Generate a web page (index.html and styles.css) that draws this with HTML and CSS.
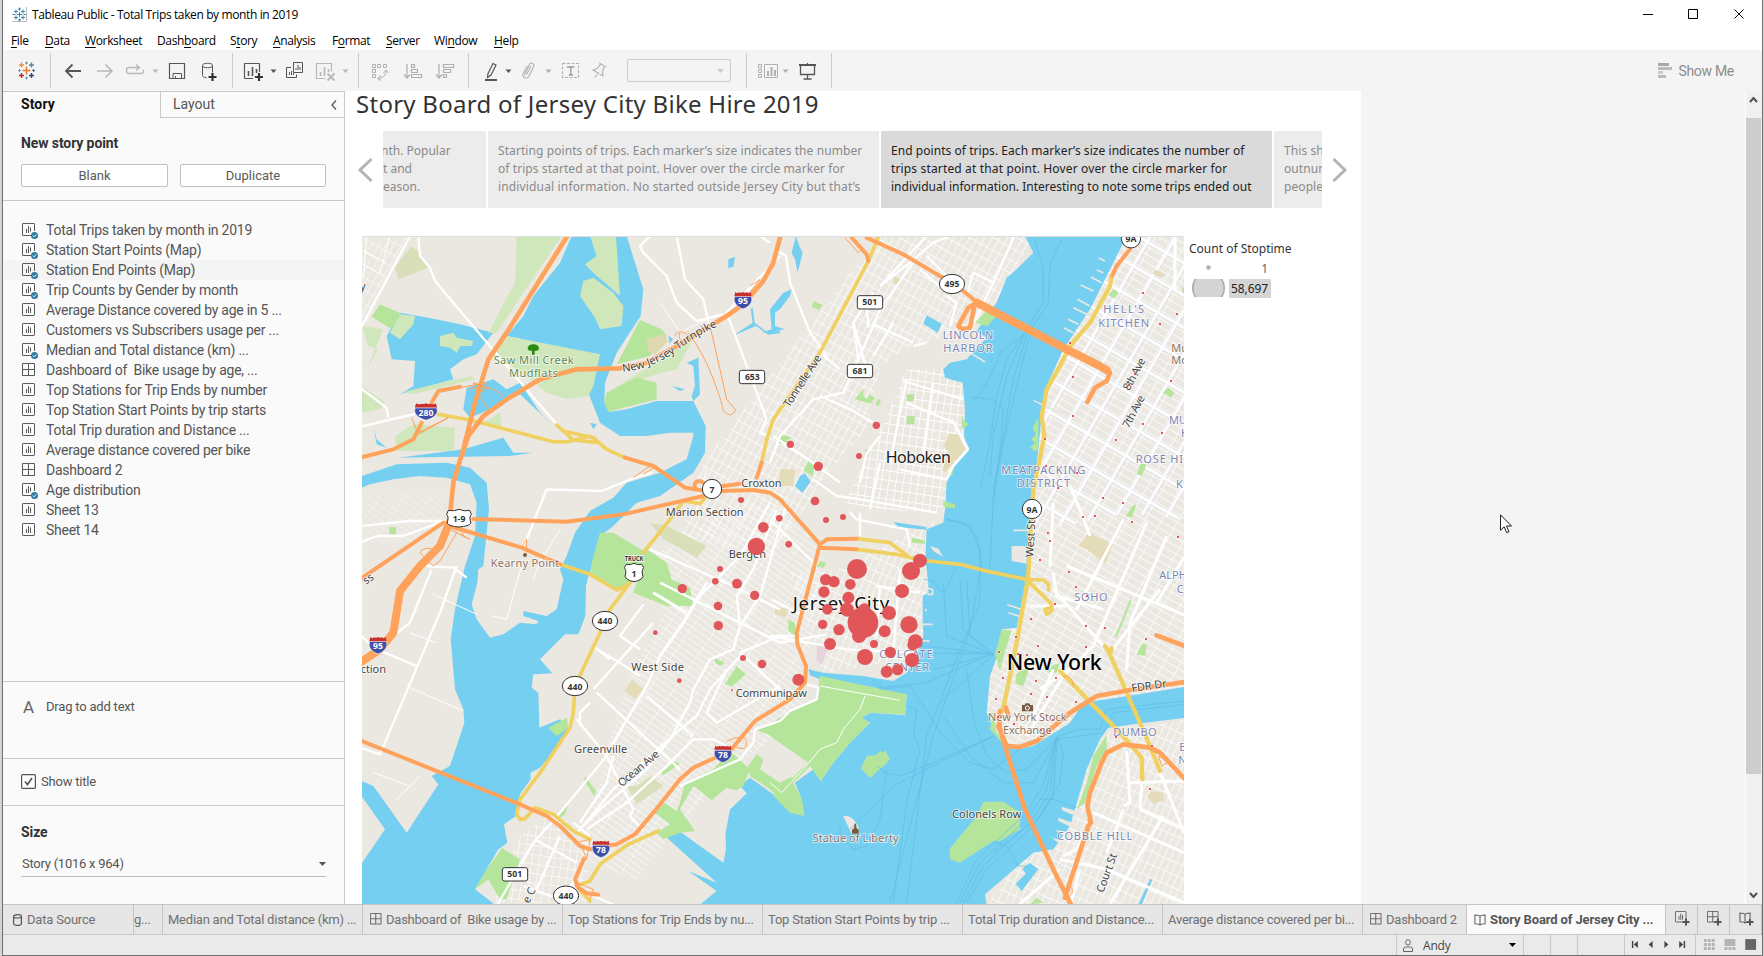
FILE: index.html
```html
<!DOCTYPE html>
<html lang="en">
<head>
<meta charset="utf-8">
<title>Tableau Public - Total Trips taken by month in 2019</title>
<link rel="stylesheet" href="styles.css">
</head>
<body>
<svg class="defs" width="0" height="0" aria-hidden="true">
  <defs>
    <symbol id="i-sheet" viewBox="0 0 17 17"><rect x=".5" y=".5" width="12" height="12" rx=".6" fill="none" stroke="#5a5a5a"/><path d="M4.500 6v4M6.500 3v7M8.500 4.500v5.500" stroke="#5a5a5a" fill="none"/></symbol>
    <symbol id="i-used" viewBox="0 0 17 17"><path d="M9 12.500H1a.5.5 0 0 1-.5-.5V1A.5.5 0 0 1 1 .5h11a.5.5 0 0 1 .5.500V8" fill="none" stroke="#5a5a5a"/><path d="M4.500 6v4M6.500 3v7M8.500 4.500v4" stroke="#5a5a5a" fill="none"/><circle cx="12.500" cy="12.500" r="3.500" fill="#2e7b9e"/><path d="M10.800 12.500l1.300 1.300 2.200-2.400" stroke="#fff" fill="none"/></symbol>
    <symbol id="i-dash" viewBox="0 0 17 17"><path d="M.5.5h12v12H.5zM6.500.5v12M.5 6.500h12" fill="none" stroke="#5a5a5a"/></symbol>
    <symbol id="i-story" viewBox="0 0 13 14"><path d="M6.500 3v9.500M6.500 3C5.500 1.500 3.500 1.500 1 1.500v9.500c2.500 0 4.500 0 5.500 1.500C7.500 11 9.500 11 12 11V1.500C9.500 1.500 7.500 1.500 6.500 3z" fill="none" stroke="#5a5a5a" stroke-width="1.100"/></symbol>
    <symbol id="i-plus" viewBox="0 0 8 8"><path d="M4 .5v7M.5 4h7" stroke="#555" stroke-width="2" fill="none"/></symbol>
  </defs>
</svg>

<div class="window">
  <header class="titlebar">
    <svg class="app-icon" width="15" height="15" viewBox="0 0 15 15"><path d="M7.500 5v5M5 7.500h5M4 2.500v4M2 4.500h4M11 2.500v4M9 4.500h4M4 8.500v4M2 10.500h4M11 8.500v4M9 10.500h4M7.500.5v3M6 2h3M7.500 11.500v3M6 13h3M.5 7.500h3M11.500 7.500h3" stroke="#3b84ad" fill="none"/><path d="M14.500 0v14.500H0" stroke="#bbb" fill="none"/></svg>
    <span class="caption">Tableau Public - Total Trips taken by month in 2019</span>
    <svg class="win-controls" width="120" height="28" viewBox="1640 0 120 28"><path d="M1643 14.500h10M1688.500 9.500h9v9h-9zM1734.500 9.500l9 9M1743.500 9.500l-9 9" fill="none" stroke="#000"/></svg>
  </header>
  <nav class="menubar">
    <span><u>F</u>ile</span><span><u>D</u>ata</span><span><u>W</u>orksheet</span><span>Dash<u>b</u>oard</span><span>S<u>t</u>ory</span><span><u>A</u>nalysis</span><span>F<u>o</u>rmat</span><span><u>S</u>erver</span><span>Wi<u>n</u>dow</span><span><u>H</u>elp</span>
  </nav>

  <div class="toolbar">
    <svg class="tools" width="48" height="41" viewBox="3 50 48 41">
      <g fill="none" stroke-width="1.400"><path d="M26.500 66.500v8M22.500 70.500h8" stroke="#e8762d"/><path d="M21.500 62.500v5M19 65h5" stroke="#eb912c"/><path d="M31.500 62.500v5M29 65h5" stroke="#59879b"/><path d="M21.500 73v5M19 75.500h5" stroke="#c72035"/><path d="M31.500 73v5M29 75.500h5" stroke="#1f457e"/><path d="M26.500 61.500v3M25 63h3M26.500 76.500v3M25 78h3M18 70.500h3M19.500 69v3" stroke="#7199a6" stroke-width="1"/><path d="M32 70.500h3M33.500 69v3" stroke="#5b6591" stroke-width="1"/></g>
    </svg>
    <svg class="tools" width="182" height="41" viewBox="51 50 182 41">
      <g fill="none" stroke="#555" stroke-width="1.800"><path d="M66 71h15M72.500 64.500L66 71l6.500 6.500"/></g>
      <g fill="none" stroke="#b8b8b8" stroke-width="1.600"><path d="M97 71h15M105.500 64.500l6.500 6.500-6.500 6.500"/><path d="M139 67.500h-10a2.500 2.500 0 0 0-2.500 2.500v1a2.500 2.500 0 0 0 2.500 2.500h12a2.500 2.500 0 0 0 2.500-2.500v-1.500M136 64.500l3.500 3-3.500 3" stroke-width="1.300"/></g>
      <path d="M152.500 69.500h6l-3 3.500z" fill="#b8b8b8"/>
      <g fill="none" stroke="#555"><path d="M169.500 63.500h15v15h-15z" stroke-width="1.200"/><path d="M173 78.500v-5h8.500v5M175.500 76v2.500"/><ellipse cx="207.500" cy="65.500" rx="5" ry="2.200"/><path d="M202.500 65.500v10c0 1 1.500 2 4 2.300M212.500 65.500v7"/></g>
      <path d="M212.500 73v8M208.500 77h8" stroke="#333" stroke-width="2.200"/>
    </svg>
    <svg class="tools" width="126" height="41" viewBox="233 50 126 41">
      <g fill="none" stroke="#555"><path d="M253 78.500h-8a.5.5 0 0 1-.5-.5V64a.5.500 0 0 1 .5-.5h14a.5.500 0 0 1 .5.500v8" stroke-width="1.200"/><path d="M248.500 71v5M252.500 67v9M256.500 69v4" stroke-width="1.600"/><path d="M293.500 62.500h9v10h-9zM291 67.500h-4.500v10h10v-3M296 68v2M298 65v5M300 67v3M289.500 72v3M291.500 71v4M293.500 73v2"/></g>
      <path d="M259 73v8M255 77h8" stroke="#333" stroke-width="2.200"/><path d="M270.500 69.500h6l-3 3.500z" fill="#555"/>
      <g fill="none" stroke="#b8b8b8"><path d="M325 78.500h-8.500v-15h15v8" stroke-width="1.200"/><path d="M320.500 72v4M324.500 67v9M328.500 69v3" stroke-width="1.600"/><path d="M327.500 73.500l7 7M334.500 73.500l-7 7" stroke-width="1.800"/></g><path d="M342.500 69.500h6l-3 3.500z" fill="#b8b8b8"/>
    </svg>
    <svg class="tools" width="110" height="41" viewBox="359 50 110 41">
      <g fill="none" stroke="#b0b0b0"><path d="M372.500 64.500h3v3h-3zM377.500 64.500h3v3h-3zM383.500 64.500h3v3h-3zM372.500 69.500h3v3h-3zM372.500 74.500h3v3h-3z"/><path d="M386 70.500c0 5-3 7.500-8 8M383.500 73l2.500-3 2.500 3M381 75.500l-3.500 3 3.500 2"/><path d="M407 64v13M404 74.500l3 3.500 3-3.500M411.500 64.500h3v3h-3zM411.500 69.500h6v3h-6zM411.500 74.500h10v3h-10z" stroke-width="1.200"/><path d="M439 64v13M436 74.500l3 3.500 3-3.500M443.500 64.500h10v3h-10zM443.500 69.500h7v3h-7zM443.500 74.500h3v3h-3z" stroke-width="1.200"/></g>
    </svg>
    <svg class="tools open" width="150" height="41" viewBox="469 50 150 41">
      <g fill="none" stroke="#555"><path d="M488 73.500l5-10 3 1.500-5 10-3.500 2.500z" stroke-width="1.200"/><path d="M485 80h12" stroke-width="2"/></g><path d="M505.500 69.500h6l-3 3.500z" fill="#555"/>
      <g fill="none" stroke="#b0b0b0" stroke-width="1.100"><path d="M524.500 75l5-10.500a2.300 2.300 0 0 1 4.200 2l-4.700 9.500a3 3 0 0 1-5.800-2.500l4-7.500M526.500 74.500l4.500-8.500"/><path d="M562.500 63.500h16v14h-16z" stroke-dasharray="3 1.500"/><path d="M594.500 77.500l4.500-5M600 63.500l5.500 3-1.500 1-1.500 4 .5 4.500-2.500-1.500-5-3-2.500-1.500 4-1.500 3-3.500z" /></g>
      <path d="M567 67h7.500M570.800 67v8M569 75h4" stroke="#999" stroke-width="1.300"/><path d="M545.500 69.500h6l-3 3.500z" fill="#b0b0b0"/>
    </svg>
    <span class="fit-select"><svg width="8" height="4" viewBox="0 0 8 4"><path d="M0 0h7L3.500 4z" fill="#ccc"/></svg></span>
    <svg class="tools" width="86" height="41" viewBox="747 50 86 41">
      <g fill="none" stroke="#b0b0b0"><path d="M759.500 64.500h3v3h-3zM759.500 69.500h3v3h-3zM759.500 74.500h3v3h-3zM765.500 64.500h13v13h-13z"/><path d="M769 71v5M772.500 67v9M776 70v6" stroke-width="2"/></g><path d="M783.500 69.500h6l-3 3.500z" fill="#b0b0b0"/>
      <g fill="none" stroke="#555"><path d="M800 65h17" stroke-width="2"/><path d="M801.500 66v8.500h14V66M808.500 63v1M808.500 75v4M804.500 79h8" stroke-width="1.300"/></g>
    </svg>
    <span class="show-me"><svg width="14" height="15" viewBox="0 0 14 15"><path d="M0 0h11v3H0z" fill="#a8a8a8"/><path d="M0 4h14v3H0z" fill="#bbb"/><path d="M0 8h5v3H0z" fill="#ccc"/><path d="M0 12h8v3H0z" fill="#bbb"/></svg>Show Me</span>
  </div>

  <main class="body">
    <aside class="sidebar">
      <div class="pane-tabs"><b>Story</b><span>Layout<svg width="6" height="10" viewBox="0 0 6 10"><path d="M5 .5L1 5l4 4.500" fill="none" stroke="#555" stroke-width="1.300"/></svg></span></div>
      <section class="new-point">
        <h3>New story point</h3>
        <div class="buttons"><button>Blank</button><button>Duplicate</button></div>
      </section>
      <ul class="sheets">
        <li><svg><use href="#i-used"/></svg>Total Trips taken by month in 2019</li>
        <li><svg><use href="#i-used"/></svg>Station Start Points (Map)</li>
        <li class="hover"><svg><use href="#i-used"/></svg>Station End Points (Map)</li>
        <li><svg><use href="#i-used"/></svg>Trip Counts by Gender by month</li>
        <li><svg><use href="#i-sheet"/></svg>Average Distance covered by age in 5 ...</li>
        <li><svg><use href="#i-sheet"/></svg>Customers vs Subscribers usage per ...</li>
        <li><svg><use href="#i-used"/></svg>Median and Total distance (km) ...</li>
        <li><svg><use href="#i-dash"/></svg>Dashboard of&nbsp; Bike usage by age, ...</li>
        <li><svg><use href="#i-sheet"/></svg>Top Stations for Trip Ends by number</li>
        <li><svg><use href="#i-sheet"/></svg>Top Station Start Points by trip starts</li>
        <li><svg><use href="#i-sheet"/></svg>Total Trip duration and Distance ...</li>
        <li><svg><use href="#i-sheet"/></svg>Average distance covered per bike</li>
        <li><svg><use href="#i-dash"/></svg>Dashboard 2</li>
        <li><svg><use href="#i-used"/></svg>Age distribution</li>
        <li><svg><use href="#i-sheet"/></svg>Sheet 13</li>
        <li><svg><use href="#i-sheet"/></svg>Sheet 14</li>
      </ul>
      <section class="drag-text"><i>A</i>Drag to add text</section>
      <section class="show-title"><svg width="15" height="15" viewBox="0 0 15 15"><rect x=".6" y=".6" width="13.800" height="13.800" rx="1" fill="#fff" stroke="#555" stroke-width="1.200"/><path d="M4 7.500l2.500 3L11 4" fill="none" stroke="#555" stroke-width="1.700"/></svg>Show title</section>
      <section class="size"><h3>Size</h3><div class="size-select">Story (1016 x 964)<svg width="7" height="4" viewBox="0 0 7 4"><path d="M0 0h7L3.500 4z" fill="#555"/></svg></div></section>
    </aside>

    <div class="workspace">
      <div class="story">
        <h1>Story Board of Jersey City Bike Hire 2019</h1>
        <div class="navigator">
          <svg width="27" height="26" viewBox="0 0 27 26"><path d="M15.500 2L4 13l11.500 11" fill="none" stroke="#b4b4b4" stroke-width="3"/></svg>
          <div class="points">
            <p class="point first">nth. Popular<br>t and<br>eason.</p>
            <p class="point">Starting points of trips. Each marker’s size indicates the number<br>of trips started at that point. Hover over the circle marker for<br><span class="loose">individual information. No started outside Jersey City but that’s</span></p>
            <p class="point active">End points of trips. Each marker’s size indicates the number of<br><span class="loose">trips started at that point. Hover over the circle marker for</span><br><span class="tight">individual information. Interesting to note some trips ended out</span></p>
            <p class="point">This shows that men<br>outnumber women and<br>people usage</p>
          </div>
          <svg width="27" height="26" viewBox="0 0 27 26"><path d="M11.500 2L23 13 11.500 24" fill="none" stroke="#b4b4b4" stroke-width="3"/></svg>
        </div>
        <div class="viz">
<svg class="map" width="822" height="667" viewBox="6 3 2466 2001">
  <defs>
    <pattern id="g-heights" width="20" height="34" patternUnits="userSpaceOnUse" patternTransform="rotate(29)"><path d="M0 0v34M0 0h20" stroke="#fff" stroke-width="4" fill="none"/></pattern>
    <pattern id="g-hob" width="22" height="28" patternUnits="userSpaceOnUse" patternTransform="rotate(8)"><path d="M0 0v28M0 0h22" stroke="#fff" stroke-width="5" fill="none"/></pattern>
    <pattern id="g-nyc" width="44" height="21" patternUnits="userSpaceOnUse" patternTransform="rotate(30)"><path d="M0 0v21M0 0h44" stroke="#fff" stroke-width="4" fill="none"/></pattern>
    <pattern id="g-nyc2" width="66" height="84" patternUnits="userSpaceOnUse" patternTransform="rotate(30)"><path d="M8 0v84M0 10h66" stroke="#dddeea" stroke-width="11" fill="none"/><path d="M8 0v84M0 10h66" stroke="#fff" stroke-width="8" fill="none"/></pattern>
    <pattern id="g-west" width="17" height="62" patternUnits="userSpaceOnUse" patternTransform="rotate(-55)"><path d="M0 0v62M0 0h17" stroke="#fff" stroke-width="3.500" fill="none"/></pattern>
    <pattern id="g-bk" width="20" height="36" patternUnits="userSpaceOnUse" patternTransform="rotate(24)"><path d="M0 0v36M0 0h20" stroke="#fff" stroke-width="4" fill="none"/></pattern>
    <path id="turnpike" d="M788 408Q880 398 950 345T1080 268"/>
    <symbol id="s-int" viewBox="0 0 56 54" overflow="visible" preserveAspectRatio="none"><path d="M3 14C-3 30 8 46 28 53 48 46 59 30 53 14z" fill="#3d4fa8" stroke="#fff" stroke-width="2"/><path d="M5 0q5 5 12 1 6 3 11-1 5 4 11 1 7 4 12-1l3 13H2z" fill="#c9302c"/></symbol>
  </defs>
  <path class="land" d="M0 0h2480v2010H0z"/>
  <path d="M0 0h150L20 260 0 270z" fill="url(#g-heights)" opacity=".7"/>
  <path d="M1480 100L1560 0h460l-30 60-60 100-80 120-200 50-90 60-40 190-130 150-90 140-60 90-280-60 60-210z" fill="url(#g-heights)"/>
  <path d="M1640 400l160 0 25 240-60 190-220-10-90-20 120-250z" fill="url(#g-hob)"/>
  <path d="M1440 1000l290-150 30 400-370 60-100-300z" fill="url(#g-bk)"/>
  <path d="M880 960l290-180 220 130-40 340-30 220-100 50-120 100-150 160-120 150-170-60 90-370 70-200 90-160z" fill="url(#g-west)"/>
  <path d="M2290 0h190v1350l-250 110-330 80-40-270 90-400 30-330z" fill="url(#g-nyc)"/>
  <path d="M2290 0h190v850l-180-20-300 60 30-430z" fill="url(#g-nyc2)"/>
  <path d="M2240 1490l240-40v560h-600z" fill="url(#g-bk)"/>
  <path d="M480 1800l100-70 110 70-10 200H400z" fill="url(#g-hob)" opacity=".7"/>
  <path d="M10 770h240v80l-60 70H10z" fill="url(#g-west)" opacity=".5"/>

  <g class="water">
    <path d="M635 0L800 0 850 160 842 240 770 350 735 440 733 500 750 527 800 520 890 495 1000 495 1037 570 1035 650 1000 710 900 780 830 800 760 870 720 900 700 980 688 1010 678 1050 676 1140 655 1195 615 1195 540 1270 577 1312 520 1315 515 1355 535 1370 538 1475 600 1450 626 1475 595 1530 540 1595 512 1610 512 1630 480 1675 468 1740 432 1765 442 1820 415 1840 345 1960 410 2010 0 2010 0 1890 75 1780 0 1674 0 1633 40 1650 140 1790 235 1645 215 1620 270 1590 300 1500 313 1460 310 1420 285 1360 272 1210 285 1120 315 990 345 900 350 800 330 745 260 725 180 720 100 730 30 745 0 757 0 722 110 685 260 680 330 695 380 740 387 820 370 990 355 1000 352 1040 335 1105 350 1150 390 1205 430 1195 480 1160 530 1165 535 1155 490 1140 490 1125 560 1140 590 1120 610 1030 600 1000 620 960 645 890 690 825 760 785 800 740 900 710 980 670 1000 600 1000 590 930 590 860 600 780 600 720 560 685 470 690 420 720 355 650 345 440 300 490 240 520 180 600 80z"/>
    <path d="M120 230L205 245 300 265 400 290 350 355 310 370 270 400 280 430 120 475 160 450 165 375 95 370 80 300zM320 455L400 430 440 460 480 440 540 530 580 570 480 475 390 520 330 545 310 520zM115 665L310 640 430 605 460 650 520 650 450 660 300 662z"/>
    <path d="M1105 70l20-8-5 30-15 5zM1178 215l6 45 40 30 36-6 0 8-36 4-36-26-70 30 60-40-6-40zM1308 0l10 30 10 20-15 60-8-40-10-20zM1295 160l-5 20-30 40-15 10 0 40 30 10-50 10-20 0 30-10-5-60 40-50zM935 450l40 10-15 5zM1015 365l5 110-20 20-5-15 10-30-5-60-20-10zM690 560l20 5-10 15zM780 460l10 30-30 30-20-10 20-10zM925 300l14 8-10 15zM40 570l10 40 30 25-30-10z"/>
    <path d="M1995 0L2020 50 1970 100 1940 125 1910 200 1850 285 1880 305 1820 370 1770 380 1750 400 1755 425 1808 440 1815 520 1812 600 1825 640 1775 700 1760 740 1755 820 1750 860 1700 880 1696 970 1705 1040 1705 1070 1688 1080 1688 1150 1690 1200 1670 1260 1640 1310 1600 1335 1540 1325 1510 1320 1390 1310 1345 1300 1350 1318 1380 1330 1640 1378 1635 1437 1530 1430 1505 1445 1530 1460 1470 1520 1420 1580 1382 1635 1360 1600 1305 1640 1325 1690 1330 1740 1260 1690 1170 1625 1140 1650 1160 1672 1110 1720 1095 1760 1098 1840 1090 1880 950 1780 915 1800 1070 1940 985 1905 1070 1965 1015 2010 1880 2010 1875 1975 2020 1850 2080 1840 2130 1770 2145 1720 2180 1600 2220 1510 2245 1475 2320 1465 2480 1445 2480 1352 2270 1385 2170 1400 2130 1460 2020 1530 1960 1540 1910 1490 1880 1430 1890 1320 1915 1250 1925 1180 1970 1175 1985 1100 2003 1000 2005 880 2020 760 2035 640 2045 540 2060 450 2110 340 2190 220 2235 130 2270 60 2300 0z"/>
    <path d="M1700 238l45 25-12 27-43-27zM1335 712l17 25-25 33-22-20 15-30zM1600 858l100 15v8l-85-8zM2370 1930l8 0-35 80h-10zM2010 1880l25 20-50 65-18-22 30-30-10-15z"/>
  </g>
  <g class="land">
    <path d="M1450 1740q25-5 45 30v20l-20 5zM2090 530l-70-35v-4l72 32z"/>
    <g fill="none" stroke="#ebe8e2" stroke-width="5"><path d="M2235 75l-18-9M2230 110l-20-9M2225 140l-32-17M2200 165l-38-18M2190 210l-38-20M2180 235l-40-20M2155 265l-30-15M2140 290l-28-14M1875 378l-45-28M1890 340l-30-15M2010 883h-50M1700 1055l18 6v14h-16M1700 1125l-5 -6M1688 1165h30M1680 1215h30M1990 1122l-48-16M1990 1145l-45-15"/></g>
    <path d="M1985 930h-30v45l45 8v-50zM2165 1730l-60-18v10l55 24zM2150 1765l-55-20v10l50 24zM2135 1790l-50-8 40 28zM2120 1820l-45-16 30 26zM1710 930l25 8 15 25-30-18z"/>
  </g>
  <g class="parks">
    <path class="marsh" d="M470 0L605 0 410 290 385 290 465 140zM690 0L768 0 780 180 700 110 675 85 710 60zM670 135L700 125 760 170 790 210 785 270 720 280 705 245 660 180zM440 300L720 355 700 450 685 480 625 490 560 470 500 420 440 380 400 360zM160 565L285 575 280 645 110 645 105 600zM130 468L330 420 345 430 160 475zM6 270L70 280 20 400 55 340 25 330zM6 450L75 500 60 520 6 530zM120 235L165 240 160 265 120 310 90 290zM240 300l40-10 10 15 50 10-5 15-35 0-10 20-20-15-30-5zM370 560l50-30 5 40-30 5zM790 440L960 330 1000 310 950 400 890 415 740 470z"/>
    <path class="khaki-soft" d="M130 60L155 30 175 45 205 95 115 130 105 95zM870 860L920 870 1040 930 1010 965 910 910zM830 1650L870 1620 910 1650 830 1705 800 1650z"/>
    <path d="M60 205L122 232 95 280 35 242zM840 252L905 280 920 300 870 360 770 385 800 330 820 290zM740 470L830 425 890 440 890 490 745 527 733 500zM720 890L760 890 860 950 855 1010 810 1045 770 1060 690 1015 695 980zM860 940L920 980 935 1030 990 1055 1000 1110 920 1110 820 1070 840 1010zM88 873h20v22H88zM1130 1290L1157 1315 1115 1352 1095 1345zM1065 1265l30 15-15 10-15-10z"/>
    <path d="M565 1475L620 1445 625 1475 590 1500zM425 1835L480 1870 440 1990 420 1990 385 1930 345 1960 380 1900 420 1845zM585 1740L625 1705 615 1735 600 1745zM675 1620l33 45-5 15-30-45zM905 1610l40-35 15 8-50 35z"/>
    <path d="M975 1640L1060 1600 1110 1545 1170 1600 1150 1650 1090 1690 1090 1745 1040 1770 1065 1700 1000 1650 960 1720 1005 1785 960 1790 910 1810 890 1790 930 1765 885 1730 915 1700 950 1725 960 1700zM1165 1590L1190 1555 1210 1570 1200 1600 1260 1640 1260 1690 1230 1660 1170 1620zM1185 1480L1260 1455 1260 1510z"/>
    <path d="M1380 1320L1640 1375 1635 1435 1530 1430 1505 1445 1530 1460 1470 1520 1420 1580 1382 1635 1350 1590 1300 1640 1325 1690 1333 1740 1290 1730 1240 1680 1260 1640 1300 1620 1345 1580 1230 1500 1230 1465 1290 1425 1370 1390zM1325 1685l8 50-60-20z"/>
    <path class="land" d="M1230 1510L1340 1580 1300 1625 1230 1585zM1005 1735L1100 1655 1160 1672 1110 1720 1095 1800 1040 1790z"/>
    <path d="M1562 1545L1590 1570 1530 1627 1503 1597 1520 1560 1545 1558zM1575 1543L1590 1570 1570 1592 1550 1572zM1870 1697L1930 1697 1980 1730 1980 1780 1920 1815 1900 1815 1800 1880 1770 1870 1768 1840 1830 1765 1850 1740z"/>
    <path d="M1360 195l28 12-12 15-20-10zM1880 225l33 10-30 35-38-10zM1510 458L1510 480 1540 505 1485 490zM1530 475l15 12-15 15-12-8zM1555 488l8 8-8 15-8-8zM1640 475h22v20h-22zM1640 540l25 0-3 25h-22zM1265 598l30 5-20 20-25-2zM1345 675l18 12-5 35-28-20zM1750 795l35 10v12l-35-3zM1655 905l40 8v10l-40-3zM2260 160l16 10-12 18-18-10zM2425 455l18 15-10 15-24-15zM2190 905l50 35-15 20-45-30zM2330 805l-15 40-18-5 20-30zM2360 685l-15 35-14-5 10-32zM2035 545l0 95-10 5-15-10 15-15-12-10 15-15-10-15 5-15zM1925 1180l30 5-20 60-15 60-15-50zM2010 1290l-20 60-25-8 5-30zM2100 1280l-10 30-30-2 20-20zM2240 1497L2200 1560 2180 1640 2150 1720 2175 1700 2210 1590 2240 1540zM2050 2000l-20-15-20 20zM1805 535l8 20 14 10-22 15zM1515 640l12 0-10 40zM1785 690l-10 30-12 5zM2480 145l-15 15 10 20zM2360 1225l-5 35-25-5 15-30z"/>
    <path d="M1380 975l20 5-10 15-20-3zM1285 1150l20 10 0 40-20-15zM2310 1090l5 5-45 110-5-5zM1900 1420l10 70 40 40-15 0-45-50z"/>
    <path class="khaki" d="M1765 595l30 0 20 45-60 70-8-10 20-50-15-20zM1260 700l45 0-5 50-45 0zM2185 890L2260 925 2235 985 2180 940 2155 930zM815 1330l35 30-25 30-32-25zM2375 1665l36 5 0 22-30 12-20-22zM2385 100l30 15-12 10-25-12zM1600 120l25 12-12 15-15-8zM1245 1110l40 10-10 25-30-10z"/>
    <path d="M860 310l50-15 15 20-40 40-20-10z" fill="#dfd8b0"/>
    <path d="M1370 1220l15 10 20 5-20 50-15-10z" fill="#e8d3dd"/>
  </g>

  <g class="ferry">
    <path d="M2020 0L2050 100 2050 200 1995 290 1940 370 1910 480 1890 620 1860 760M2110 0L2070 80 2065 200 2000 300 1960 430 1930 600 1900 760M2005 310L1965 470 1930 620 1900 780 1890 1000M1990 300L1940 420 1900 600 1890 720M1840 490Q1870 480 1920 350L2000 290M1830 483L1900 490 1930 520 1920 640 1900 800M1760 850L1810 860 1850 900 1865 980 1830 1180 1720 1500 1590 2000M1760 850L1830 870 1860 940 1860 1100 1800 1240 1700 1500 1640 2000M1690 1030L1720 1035 1740 1065 1760 1060 1790 990M1800 1030L1810 1180 1900 1255M1820 1030L1830 1200 1900 1255M1750 1040L1760 1200 1900 1255M1700 1250L1900 1255 1780 1240 1680 1230M1720 1300L1900 1255 1740 1400M1560 1340L1560 1355 1700 1340 1880 1260M1540 1330L1560 1360 1650 1350 1750 1500 1830 1580 1900 1600 1980 1540M1640 1410L1670 1420 1660 1500 1680 1540 1640 1700 1600 2000M1550 1590L1580 1610 1560 1750 1520 1830 1480 1840 1440 1800 1440 1770M1570 1610L1620 1620 1720 1580 1900 1500M1470 1780L1600 1650 1900 1500M2088 1505L2050 1650 1990 1740 1850 1870 1790 2000M2088 1505L2060 1660 2000 1750 1860 1880 1800 2000M2090 1505L2070 1670 2010 1760 1870 1890 1810 2000M2092 1505L2080 1680 2020 1770 1880 1900 1820 2000M2095 1505L2110 1550 2100 1640 2040 1740 1900 1850M2088 1510L2230 1490 2260 1430 2475 1405M2088 1505L2150 1480 2220 1480 2240 1420 2475 1395M2088 1510L2000 1600 1940 1610 1880 1560 1840 1450 1820 1300M2088 1515L2020 1640 1930 1640 1830 1560 1750 1440M1900 1820L1940 1830 1975 1890 2000 1890M2040 1690L2080 1690 2150 1715"/>
  </g>

  <g class="streets">
    <path d="M175 0l5 60 30 35 15 40 160 190 110 130 95 110M150 0L0 280M0 455l80 60 5 30M0 572l165-38M0 870l150-15 110 0M0 920l50-20h80l120-45M500 910l60-150 165 5 100-40 50-15M500 910l-20 30"/>
    <path d="M200 990l80 5 40 30M215 1000L150 1160 50 1240M290 990L240 1130 60 1555 0 1535M50 1240l120 50M0 1195l50 50"/>
    <path d="M870 0l-30 30 10 20 70 70 30 80 60 55 80-20M950 0l25 130 55 60 20 90M1260 60L1100 230 1220 550 1200 590 1230 600M1245 40L1278 60 1290 140 1350 290 1400 360M1200 0l30 20"/>
    <path d="M1540 265L1660 320M1480 260L1520 400M1520 215l5 60M1560 150L1700 0M1560 150L1650 80 1720 20 1770 0M1540 170L1480 260 1495 370M1600 260L1540 360M1450 470L1360 490 1260 600 1230 680M1450 470L1500 360 1560 220 1660 80M1900 140L1950 30 1960 0M1840 260L1900 140 1840 110 1820 180M1680 100L1760 170M1700 60l60 60M1760 180L1790 200 1770 270M1700 320L1660 330M1380 350l60 50"/>
    <path d="M1380 480L1470 520 1540 560M1630 435L1810 490M1500 740L1520 650 1560 600M1360 730L1430 780 1500 790 1730 830M1240 600L1330 660 1440 740M1230 850l80 80 60 60M1470 830L1490 850 1640 880 1650 930M1500 830L1500 900M1775 550L1825 640M1825 640L1780 690 1760 730 1620 700M1560 680L1530 820M1640 430L1590 680M1720 440L1690 660M1780 560L1640 500"/>
    <path d="M1230 800L1140 960 1020 1080 970 1160 900 1260 860 1350 800 1450 740 1560 600 1730 520 1820 410 2010M870 940L1120 1050 1260 1120M900 1040L1260 1220 1400 1195M1250 820L1180 1000 1130 1080 1140 1170M1280 800L1200 1080 1140 1170 1120 1240 1050 1270 1000 1360 990 1400 930 1510 860 1600 720 1720 650 1790M650 1450L740 1560 820 1720 810 1740 850 1785M850 1105L780 1200 840 1240M710 1240L780 1280 840 1320M710 1370L960 1600M700 1360L880 1160M690 1400L660 1430 660 1470M1150 1250L1050 1360 1010 1440 960 1480 760 1660 660 1780M1000 1510L1060 1510 1100 1530M1000 1510L920 1590 800 1700 680 1780M860 1380L1000 1500M1140 1250L1260 1200M1140 1250L1260 1360M1260 1350L1070 1460 1040 1430 1100 1300M525 1810L650 1880M490 1950L600 1990M600 1800L530 1960M660 1900l-60 110M700 1980l70 30M640 1760L690 1800M760 1560L740 1640 660 1760M700 1230l50 40"/>
    <path d="M1260 1455L1290 1425 1370 1390 1375 1355 1340 1345M1260 1455L1185 1480 1180 1520 1140 1570 960 1650M1235 1090L1330 1140M1230 1200L1460 1240 1650 1250M1230 1200 1310 1200M1560 1050L1550 1200M1620 1000L1600 1250M1550 1050l130 20"/>
    <path class="wide" d="M880 1070L980 1130M1040 1040L970 1160 900 1260M2445 0V160M2080 1060L2230 1230M2120 990L2480 1140M2310 1160L2420 900M2310 1160L2300 1300M2390 1100L2475 960M2130 750L2160 820 2190 900M2080 800L2070 990M2080 1010L2090 1080 2230 1120M2290 850L2150 1120M2010 1110L2120 1110M2360 860L2200 1230 2110 1320 2000 1500M2250 1250L2400 1060M2040 1360L2130 1300M2020 1440L2080 1300M2300 1545L2310 1700 2290 1710M2310 1640L2472 1635M2345 1640L2340 1720M2400 1610L2472 1790M2200 1730L2472 1850M2290 1720L2240 1850M2110 1860L2150 1840 2170 1800M2100 1870L2240 1900 2472 2000M2410 1740L2250 2004M1980 2004L2100 1900M2340 1720L2472 1780M2130 2010L2160 1900"/>
    <path class="thin" d="M220 1075l130 60M400 1140l40 10 50-180M150 1190l80 30M150 1355l160 70M1040 700l-30 120M1515 1380L1500 1420 1450 1480 1430 1520 1380 1540 1330 1600 1265 1670 1230 1640M1380 1350L1620 1393M900 200l60 90 80-40M550 950l-30 80M600 880l-60 100M0 40l80 40M0 80l70 40M20 0l-10 130M90 0l-30 110M150 1650L40 1610M110 1690L180 1620"/>
  </g>
  <g class="yellow">
    <path d="M235 535L330 552 580 617 620 618 690 600M590 567L640 612 715 620M610 585L700 605 740 640 795 665"/>
    <path d="M1555 3L1525 75 1380 350 1240 550 1220 610 1205 680"/>
    <path d="M1035 785L1020 803 970 795 930 850 850 950M600 985L690 1015 770 1062 800 1050M810 1040L750 1120 720 1190 645 1350 640 1430 630 1475 540 1610 480 1690 470 1735 480 1750 495 1748 525 1715 580 1735 640 1785 690 1810M895 1785L805 1825 720 1885 690 1935 650 1950 690 1995"/>
    <path d="M1490 908L1590 920 1650 965M1490 940L1610 955 1650 965 1705 975 1800 985 1870 1003 2000 1030 2050 1032 2066 1045 2066 1062M2000 1030L2075 1105 2075 1125 2060 1135 2055 1120 2072 1115"/>
    <path class="fat" d="M2255 120L2250 150 2190 260 2130 330 2100 390 2060 460 2045 540 2053 600 2035 690 2020 760 2005 1010 2000 1050 1970 1220 1950 1320 1928 1425M2100 1305L2280 1490 2345 1565 2347 1630M2235 1230L2250 1255 2370 1530 2400 1605M2250 1255l5-18"/>
  </g>
  <g class="orange">
    <path class="trunk" d="M622 0L440 290 385 370 345 500 310 640 280 740 268 860M1260 5L1240 80 1210 135 1150 205 1100 240 950 330 860 380 780 397 650 400 540 430 440 490 370 540 325 600 305 660"/>
    <path d="M0 665L100 640 160 610 185 560M215 500L235 465 300 452"/>
    <path class="fat" d="M268 860L240 930 180 990 120 1065 100 1190 60 1240 0 1280"/>
    <path d="M0 1030L110 955 250 860M268 870L485 935 600 985M340 849L620 857 790 835 1030 780M795 665L880 690 975 755 1040 765M1005 755Q1000 735 1020 735L1040 745M1085 765L1180 762 1230 770 1260 790 1380 925 1355 1020 1310 1190 1312 1225 1338 1290 1335 1340 1290 1390 1185 1455 1110 1545 1000 1595 960 1630 880 1730 825 1795 770 1825 690 1840 660 1830 600 1770 560 1740 480 1705 0 1513M1090 750L1140 743M1190 725L1205 680M1380 925L1400 910 1490 908M1380 935L1490 940"/>
    <path d="M1475 5L1520 55 1525 75M1520 5L1630 55 1740 120 1810 165 1840 190M2310 40L2270 90 2257 118"/>
    <path class="fat" d="M1850 200L2110 335 2210 385 2240 402"/><path class="trunk" d="M1850 200L1825 215 1795 270 1805 280 1830 275 1845 200M2240 402L2250 410 2240 435 2205 455 2182 498"/>
    <path d="M672 1868L645 1930 655 1955 680 1972 715 1976"/>
    <path class="trunk" d="M1920 1425L1918 1470 1935 1530 1995 1720 2080 1900 2135 2010M1938 1415L1945 1440M1915 1470L1940 1530 1980 1533 2030 1515 2130 1430 2210 1380 2310 1362 2480 1337M2115 1985L2185 1770 2193 1760 2182 1710 2190 1670 2225 1580 2240 1550 2290 1525 2370 1535 2400 1550 2480 1635M2390 1198L2480 1232"/>
  </g>
  <g class="ramps"><path d="M300 455L380 440 385 460 340 440 400 460 430 480M340 440L360 480 385 520M330 460L360 450 370 465 345 475M155 545l20 50 90-50-100 50M960 290Q950 310 975 320M985 290Q1030 350 1060 430T1090 525Q1115 550 1127 522L1100 490 1080 400 1050 270M820 725l50-35 20 0-40 25M945 300q5-18 30-10l20 20M1170 150l30-20-30 40M270 880l60 30-40-20-50 85-20 15-40-40q10-20 40-10M300 880l15 25M480 940l20-30 0 40M1100 1515q60-25 60 5t-40 10l30-30M650 1820l40-10-10 60-15-40M650 1940l50 20-10 30M2110 1320q30 0 30 30M2395 1560l35 15-25 15zM2180 1750l15 15M2130 1950q15 15 0 30M1455 5l40 45 10-10"/></g>

  <g class="labels">
    <g class="dark">
      <text><textPath href="#turnpike" textLength="318">New Jersey Turnpike</textPath></text>
      <text x="1144" y="752" textLength="121">Croxton</text>
      <text x="917" y="841" textLength="234">Marion Section</text>
      <text x="1106" y="965" textLength="112">Bergen</text>
      <text x="814" y="1304" textLength="158">West Side</text>
      <text x="642" y="1552" textLength="160">Greenville</text>
      <text x="1127" y="1382" textLength="214">Communipaw</text>
      <text x="2" y="1310" textLength="76">ction</text>
      <text x="0" y="162">y</text>
      <text x="18" y="1046" transform="rotate(-35 18 1046)">ss</text>
      <text x="785" y="1654" textLength="150" transform="rotate(-40 785 1654)">Ocean Ave</text>
      <text x="506" y="2004" transform="rotate(-63 506 2004)">e C</text>
      <text x="1288" y="516" textLength="180" transform="rotate(-57 1288 516)">Tonnelle Ave</text>
      <text x="2308" y="466" textLength="105" transform="rotate(-62 2308 466)">8th Ave</text>
      <text x="2306" y="578" textLength="105" transform="rotate(-62 2306 578)">7th Ave</text>
      <text x="2020" y="964" textLength="112" transform="rotate(-87 2020 964)">West St</text>
      <text x="2316" y="1368" textLength="106" transform="rotate(-8 2316 1368)">FDR Dr</text>
      <text x="2230" y="1972" textLength="122" transform="rotate(-70 2230 1972)">Court St</text>
      <text x="1776" y="1745" textLength="208">Colonels Row</text>
    </g>
    <text class="city" x="1577" y="680" textLength="196">Hoboken</text>
    <text class="city large" x="1298" y="1122" textLength="290">Jersey City</text>
    <text class="city big" x="1940" y="1302" textLength="285">New York</text>
    <g class="area">
      <text x="2230" y="232" textLength="122">HELL’S</text><text x="2215" y="272" textLength="152">KITCHEN</text>
      <text x="1748" y="308" textLength="152">LINCOLN</text><text x="1750" y="348" textLength="148">HARBOR</text>
      <text x="1924" y="713" textLength="252">MEATPACKING</text><text x="1970" y="753" textLength="160">DISTRICT</text>
      <text x="2427" y="563">MUR</text><text x="2463" y="602">H</text><text x="2327" y="682" textLength="142">ROSE HI</text><text x="2448" y="757">K</text>
      <text x="2398" y="1030">ALPH</text><text x="2450" y="1070">C</text><text x="2143" y="1095" textLength="100">SOHO</text>
      <text x="1558" y="1265" textLength="160">COLGATE</text><text x="1575" y="1305" textLength="132">CENTER</text>
      <text x="2260" y="1501" textLength="130">DUMBO</text><text x="2458" y="1545">B</text><text x="2455" y="1585">NA</text><text x="2091" y="1813" textLength="226">COBBLE HILL</text>
    </g>
    <g class="poi">
      <text x="392" y="993" textLength="206">Kearny Point</text><circle cx="495" cy="957" r="6"/>
      <text x="1884" y="1456" textLength="236">New York Stock</text><text x="1929" y="1493" textLength="146">Exchange</text>
      <text x="1358" y="1817" textLength="258">Statue of Liberty</text>
      <text x="2434" y="348">Mus</text><text x="2434" y="384">Mod</text>
      <path d="M1476 1793v-12l6-4 2-14 4 0 2 14 6 4v12zM1986 1407h8l3-5h11l3 5h8v19h-33z"/><circle cx="2002" cy="1416" r="6" stroke="#fff" stroke-width="3"/>
    </g>
    <g class="park-name"><text x="401" y="384" textLength="240">Saw Mill Creek</text><text x="447" y="423" textLength="146">Mudflats</text><path d="M516 356v-12q-13 2-13-7 2-12 17-12 15 0 17 12 0 9-13 7v12z"/></g>
  </g>

  <g class="shields">
    <use href="#s-int" x="1121" y="168" width="56" height="52"/><text class="inv" x="1149" y="205">95</text>
    <use href="#s-int" x="162" y="502" width="72" height="52"/><text class="inv" x="198" y="541">280</text>
    <use href="#s-int" x="26" y="1203" width="56" height="52"/><text class="inv" x="54" y="1240">95</text>
    <use href="#s-int" x="1061" y="1529" width="56" height="52"/><text class="inv" x="1089" y="1567">78</text>
    <use href="#s-int" x="695" y="1814" width="56" height="52"/><text class="inv" x="723" y="1852">78</text>
    <rect x="1138" y="403" width="76" height="40" rx="7"/><text x="1177" y="432">653</text>
    <rect x="1492" y="179" width="76" height="40" rx="7"/><text x="1529" y="208">501</text>
    <rect x="1462" y="385" width="76" height="40" rx="7"/><text x="1500" y="415">681</text>
    <rect x="427" y="1895" width="76" height="40" rx="7"/><text x="464" y="1923">501</text>
    <ellipse cx="1776" cy="144" rx="38" ry="29"/><text x="1776" y="154">495</text>
    <ellipse cx="735" cy="1155" rx="38" ry="29"/><text x="735" y="1165">440</text>
    <ellipse cx="645" cy="1350" rx="38" ry="29"/><text x="645" y="1361">440</text>
    <ellipse cx="618" cy="1979" rx="38" ry="29"/><text x="618" y="1990">440</text>
    <circle cx="1056" cy="759" r="29"/><text x="1056" y="770">7</text>
    <circle cx="2016" cy="819" r="29"/><text x="2016" y="830">9A</text>
    <circle cx="2313" cy="7" r="29"/><text x="2313" y="18">9A</text>
    <path d="M265 823q16 4 32-3 16 7 32 3l5 12q-8 8-1 26-6 10-36 12-30-2-36-12 7-18-1-26z"/><text x="297" y="857">1-9</text>
    <path d="M799 985q12 3 23-3 11 6 23 3l6 10q-8 10-2 26-4 12-27 16-23-4-27-16 6-16-2-26z"/><text x="822" y="1023">1</text><text class="truck" x="822" y="976" textLength="56" lengthAdjust="spacingAndGlyphs">TRUCK</text>
  </g>

  <g class="mini">
    <path d="M2346 168h6v6h-6zM2448 231h6v6h-6zM2397 261h6v6h-6zM2127 318h6v6h-6zM2136 420h6v6h-6zM2430 432h6v6h-6zM2322 411h6v6h-6zM2304 444h6v6h-6zM2136 537h6v6h-6zM2346 561h6v6h-6zM2403 588h6v6h-6zM2265 609h6v6h-6zM2052 606h6v6h-6zM2055 687h6v6h-6zM2148 708h6v6h-6zM2091 753h6v6h-6zM2226 783h6v6h-6zM2286 798h6v6h-6zM2166 840h6v6h-6zM2202 837h6v6h-6zM2313 855h6v6h-6zM2061 888h6v6h-6zM2067 912h6v6h-6zM2451 900h6v6h-6zM2037 969h6v6h-6zM2124 1005h6v6h-6zM2145 1050h6v6h-6zM2178 1077h6v6h-6zM2082 1101h6v6h-6zM2010 1146h6v6h-6zM2175 1167h6v6h-6zM2232 1173h6v6h-6zM1965 1200h6v6h-6zM2031 1227h6v6h-6zM2175 1230h6v6h-6zM2355 1206h6v6h-6zM1914 1245h6v6h-6zM1998 1254h6v6h-6zM1971 1251h6v6h-6zM1926 1323h6v6h-6zM2025 1332h6v6h-6zM2085 1323h6v6h-6zM2010 1371h6v6h-6zM2058 1380h6v6h-6zM2145 1395h6v6h-6zM1905 1386h6v6h-6zM1911 1440h6v6h-6zM1959 1461h6v6h-6zM2076 1449h6v6h-6zM2040 1479h6v6h-6zM2067 1482h6v6h-6zM2265 1500h6v6h-6zM2373 1527h6v6h-6zM2367 1656h6v6h-6z"/>
  </g>
  <g class="marks">
    <circle cx="1143" cy="792" r="9"/><circle cx="1210" cy="874" r="16"/><circle cx="1189" cy="931" r="26"/><circle cx="1258" cy="847" r="10"/><circle cx="1080" cy="999" r="9"/>
    <circle cx="1549" cy="568" r="11"/><circle cx="1291" cy="625" r="11"/><circle cx="1375" cy="691" r="14"/><circle cx="1497" cy="660" r="9"/><circle cx="1365" cy="795" r="13"/><circle cx="1398" cy="852" r="9"/><circle cx="1449" cy="843" r="9"/><circle cx="1286" cy="925" r="10"/><circle cx="1491" cy="999" r="30"/><circle cx="1680" cy="974" r="21"/><circle cx="1653" cy="1005" r="27"/>
    <circle cx="1397" cy="1031" r="17"/><circle cx="1422" cy="1037" r="17"/><circle cx="1392" cy="1068" r="17"/><circle cx="1471" cy="1045" r="16"/><circle cx="1626" cy="1065" r="21"/><circle cx="1465" cy="1085" r="18"/><circle cx="1402" cy="1120" r="16"/><circle cx="1461" cy="1121" r="21"/><circle cx="1513" cy="1120" r="18"/><circle cx="1497" cy="1200" r="21"/><circle cx="1509" cy="1160" r="46"/><circle cx="1587" cy="1131" r="21"/><circle cx="1388" cy="1165" r="14"/><circle cx="1437" cy="1181" r="17"/><circle cx="1574" cy="1186" r="18"/><circle cx="1647" cy="1166" r="26"/><circle cx="1410" cy="1224" r="18"/><circle cx="1542" cy="1224" r="12"/><circle cx="1658" cy="1228" r="16"/><circle cx="1666" cy="1217" r="22"/><circle cx="1515" cy="1263" r="24"/><circle cx="1591" cy="1249" r="17"/><circle cx="1656" cy="1272" r="21"/><circle cx="1580" cy="1307" r="18"/><circle cx="1613" cy="1301" r="17"/><circle cx="1315" cy="1331" r="18"/>
    <circle cx="1066" cy="1036" r="10"/><circle cx="1131" cy="1043" r="15"/><circle cx="1184" cy="1078" r="14"/><circle cx="967" cy="1058" r="14"/><circle cx="1074" cy="1110" r="13"/><circle cx="1075" cy="1169" r="14"/><circle cx="886" cy="1190" r="7"/><circle cx="1149" cy="1266" r="9"/><circle cx="1206" cy="1284" r="13"/><circle cx="958" cy="1334" r="7"/><circle cx="1116" cy="1362" r="3"/>
  </g>
</svg>
          <div class="legend">
            <h4>Count of Stoptime</h4>
            <div class="entry"><svg width="34" height="18" viewBox="0 0 34 18"><circle cx="16.500" cy="8.500" r="2.200" fill="#b0b0b0"/></svg><span>1</span></div>
            <div class="entry sel"><svg width="34" height="18" viewBox="0 0 34 18"><circle cx="16.500" cy="9" r="15.800" fill="#d4d4d4" stroke="#aaa" stroke-width="1.500"/></svg><span>58,697</span></div>
          </div>
        </div>
      </div>
      <div class="scrollbar"><svg width="17" height="17" viewBox="0 0 17 17"><path d="M4 11l3.500-4L11 11" fill="none" stroke="#505050" stroke-width="2"/></svg><i></i><svg width="17" height="17" viewBox="0 0 17 17"><path d="M4 6l3.500 4L11 6" fill="none" stroke="#505050" stroke-width="2"/></svg></div>
      <svg class="cursor" width="13" height="20" viewBox="0 0 13 20"><path d="M.5.800v15.500l3.700-3.500 2.500 5.900 2.300-1-2.500-5.700h5z" fill="#fff" stroke="#222"/></svg>
    </div>
  </main>

  <div class="tabs">
    <span class="source"><svg width="9" height="12" viewBox="0 0 9 12"><path d="M.6 2.500v7c0 2.500 7.800 2.500 7.800 0v-7C8.400 0 .6 0 .6 2.500c0 2 7.800 2 7.800 0" fill="none" stroke="#555" stroke-width="1.200"/></svg>Data Source</span>
    <span class="cut">g...</span>
    <span>Median and Total distance (km) ...</span>
    <span class="iconed"><svg width="15" height="15"><use href="#i-dash"/></svg>Dashboard of&nbsp; Bike usage by ...</span>
    <span>Top Stations for Trip Ends by nu...</span>
    <span>Top Station Start Points by trip ...</span>
    <span>Total Trip duration and Distance...</span>
    <span>Average distance covered per bi...</span>
    <span class="iconed short"><svg width="15" height="15"><use href="#i-dash"/></svg>Dashboard 2</span>
    <span class="current"><svg width="12" height="14"><use href="#i-story"/></svg>Story Board of Jersey City ...</span>
    <span class="add"><svg width="17" height="17" viewBox="0 0 17 17"><use href="#i-sheet" width="15" height="15"/><path d="M8 8h8v8H8z" fill="#e6e6e6"/><use href="#i-plus" x="7" y="7" width="8" height="8"/></svg></span>
    <span class="add"><svg width="17" height="17" viewBox="0 0 17 17"><use href="#i-dash" width="15" height="15"/><path d="M8 8h8v8H8z" fill="#e6e6e6"/><use href="#i-plus" x="7" y="7" width="8" height="8"/></svg></span>
    <span class="add"><svg width="17" height="17" viewBox="0 0 17 17"><use href="#i-story" width="12" height="14"/><path d="M8 7h8v8H8z" fill="#e6e6e6"/><use href="#i-plus" x="7" y="7" width="8" height="8"/></svg></span>
  </div>
  <footer class="status">
    <span class="user"><svg width="10" height="13" viewBox="0 0 10 13"><ellipse cx="5" cy="3.300" rx="2.300" ry="2.700" fill="none" stroke="#666"/><path d="M.5 12.500V10q0-2 2-2h5q2 0 2 2v2.500z" fill="none" stroke="#666"/></svg>Andy<svg class="caret" width="7" height="4" viewBox="0 0 7 4"><path d="M0 0h7L3.500 4z"/></svg></span>
    <span class="cell"></span><span class="cell"></span><span class="cell wide"></span>
    <svg class="pager" width="71" height="20" viewBox="1624 935 71 20"><path d="M1631 941h1.500v7H1631zM1637 941v7l-4-3.500zM1652 941v7l-4-3.500zM1664 941v7l4-3.500zM1679 941v7l4-3.500zM1683.500 941h1.500v7h-1.500z" fill="#444"/></svg>
    <svg class="views" width="67" height="20" viewBox="1695 935 67 20"><path d="M1703 939h3v3h-3zM1707 939h3v3h-3zM1711 939h3v3h-3zM1703 943h3v3h-3zM1707 943h3v3h-3zM1711 943h3v3h-3zM1703 947h3v3h-3zM1707 947h3v3h-3zM1711 947h3v3h-3zM1724 939h11v7h-11zM1724 947h3v3h-3zM1728 947h3v3h-3zM1732 947h3v3h-3z" fill="#b4b4b4"/><path d="M1745 939h11v11h-11z" fill="#666"/></svg>
  </footer>
</div>
</body>
</html>
```

FILE: styles.css
```css
* { box-sizing: border-box; }
body { margin: 0; width: 1764px; height: 956px; overflow: hidden; background: #d4d4d4; font-family: Roboto, "Open Sans", sans-serif; font-size: 14px; color: #555; }
.defs { position: absolute; }
h1, h3, h4, p, ul { margin: 0; padding: 0; font-weight: normal; list-style: none; }
svg { display: block; flex: none; }

.window { display: flex; flex-direction: column; width: 1761px; height: 956px; margin-left: 2px; border-left: 1px solid #6e6e6e; border-right: 1px solid #6e6e6e; border-bottom: 1px solid #6e6e6e; background: #fff; }
.titlebar { display: flex; align-items: center; height: 30px; padding: 0 2px 2px 9px; font: 12px "Open Sans", sans-serif; color: #000; letter-spacing: -.38px; }
.caption { margin-left: 5px; white-space: nowrap; }
.win-controls { margin: 0 0 0 auto; }
.menubar { display: grid; grid-template-columns: 34px 40px 72px 73px 43px 59px 54px 48px 60px auto; height: 20px; padding-left: 8px; font: 12px/22px "Open Sans", sans-serif; letter-spacing: -.35px; color: #000; white-space: nowrap; }
.menubar u { text-underline-offset: 2px; }

.toolbar { display: flex; align-items: center; height: 41px; background: #f4f4f4; }
.tools { background: linear-gradient(#ccc, #ccc) right 50% / 1px 35px no-repeat; }
.tools.open { background: none; }
.fit-select { display: flex; align-items: center; justify-content: flex-end; width: 104px; height: 23px; margin: 0 15px 0 8px; padding-right: 5px; border: 1px solid #ccc; border-radius: 2px; }
.fit-select + .tools { background: linear-gradient(#ccc, #ccc) left 50% / 1px 35px no-repeat, linear-gradient(#ccc, #ccc) right 50% / 1px 35px no-repeat; }
.show-me { display: flex; align-items: center; gap: 6px; margin-left: auto; padding-right: 28px; color: #8c8c8c; letter-spacing: -.3px; }

.body { display: flex; height: 813px; }
.sidebar { display: flex; flex-direction: column; width: 342px; border-right: 1px solid #c8c8c8; background: #fafafa; }
.pane-tabs { display: flex; height: 27px; border-top: 1px solid #c8c8c8; line-height: 25px; }
.pane-tabs b { width: 157px; padding-left: 18px; color: #111; letter-spacing: .1px; }
.pane-tabs span { display: flex; flex: 1; align-items: center; justify-content: space-between; padding: 0 7px 0 12px; border-left: 1px solid #c8c8c8; border-bottom: 1px solid #c8c8c8; }
.new-point { height: 83px; padding: 15px 18px 0; border-bottom: 1px solid #c8c8c8; }
h3 { font-size: 14px; line-height: 20px; font-weight: bold; color: #333; letter-spacing: -.1px; }
.buttons { display: grid; grid-template-columns: 147px 146px; gap: 12px; margin-top: 11px; }
button { height: 23px; padding: 0 0 1px; border: 1px solid #c0c0c0; border-radius: 2px; background: #fff; font: 13px Roboto, sans-serif; color: #5a5a5a; }
.sheets { flex: 1; padding-top: 19px; font-size: 14px; letter-spacing: -.25px; }
.sheets li { display: flex; height: 20px; padding-left: 19px; line-height: 21px; white-space: pre; }
.sheets svg { width: 17px; height: 17px; margin: 3px 7px 0 0; }
.sheets .hover { background: #f4f4f4; }
.drag-text { height: 77px; padding: 16px 0 0 20px; border-top: 1px solid #c8c8c8; font-size: 13px; line-height: 18px; display: flex; letter-spacing: -.2px; }
.drag-text i { width: 23px; font: 17px/18px Roboto, sans-serif; color: #666; }
.show-title { display: flex; gap: 5px; height: 47px; padding: 15px 0 0 18px; border-top: 1px solid #c8c8c8; font-size: 13px; line-height: 15px; letter-spacing: -.2px; }
.size { height: 99px; padding: 16px 18px 0; border-top: 1px solid #c8c8c8; }
.size-select { display: flex; align-items: center; justify-content: space-between; height: 23px; margin-top: 12px; padding: 0 0 3px 1px; border-bottom: 1px solid #bbb; font-size: 13px; letter-spacing: -.25px; }

.workspace { position: relative; display: flex; justify-content: space-between; flex: 1; background: #f4f4f4; }
.story { width: 1016px; background: #fff; font-family: "Noto Sans", sans-serif; }
h1 { height: 40px; padding-left: 11px; font-size: 24px; line-height: 26px; color: #333; white-space: nowrap; letter-spacing: .27px; }
.navigator { display: flex; align-items: center; height: 77px; padding-left: 11px; }
.points { display: flex; gap: 2px; width: 939px; height: 77px; overflow: hidden; }
.point { flex: none; width: 391px; padding: 11px 10px 0; background: #ececec; font-size: 12px; line-height: 18px; color: #8a8a8a; white-space: nowrap; letter-spacing: .08px; }
.point.first { width: 103px; padding-left: 0; text-indent: -2px; letter-spacing: 0; }
.point.active { background: #dadada; color: #222; letter-spacing: .05px; }
.loose { letter-spacing: .15px; }
.tight { letter-spacing: 0; }
.viz { display: flex; margin: 28px 0 0 16px; }
.map { box-sizing: content-box; margin-left: 1px; border-top: 1px solid #dedede; overflow: hidden; }
.legend { width: 110px; margin: 4px 0 0 5px; font-size: 12px; color: #333; }
.legend h4 { height: 18px; font-size: 12px; line-height: 18px; white-space: nowrap; }
.entry { display: flex; align-items: center; height: 20px; padding-left: 3px; }
.entry span { width: 42px; margin-left: 3px; padding-right: 3px; line-height: 19px; text-align: right; color: #666; letter-spacing: -.1px; }
.entry.sel span { background: #d4d4d4; color: #222; }
.scrollbar { width: 17px; border-left: 1px solid #fff; background: #f0f0f0; display: flex; flex-direction: column; }
.scrollbar i { height: 656px; margin: 10px 1px auto 0; background: #cdcdcd; }
.cursor { position: absolute; left: 1155px; top: 423px; }

.tabs { display: flex; height: 31px; border-top: 1px solid #c4c4c4; border-bottom: 1px solid #c8c8c8; background: #e6e6e6; font-size: 13px; line-height: 30px; color: #707070; letter-spacing: -.23px; }
.tabs > span { display: flex; align-items: center; width: 200px; padding-left: 5px; border-right: 1px solid #c4c4c4; white-space: pre; overflow: hidden; }
.tabs .source { width: 131px; padding-left: 10px; gap: 5px; letter-spacing: -.2px; }
.tabs .cut { width: 29px; padding-left: 0; }
.tabs > .iconed { padding-left: 7px; gap: 1px; }
.tabs .iconed svg { width: 15px; height: 15px; margin-top: 1px; }
.tabs .short { width: 104px; }
.tabs .current { width: 199px; padding-left: 7px; gap: 4px; background: #fafafa; font-weight: bold; color: #555; letter-spacing: -.12px; }
.tabs .add { width: 32px; padding-left: 9px; }
.status { display: flex; justify-content: flex-end; flex: 1; background: #eaeaea; font: 12px "Open Sans", sans-serif; color: #444; }
.status > * { border-left: 1px solid #c8c8c8; }
.user { display: flex; align-items: center; width: 127px; padding: 0 7px 0 6px; gap: 10px; letter-spacing: -.2px; }
.user .caret { margin-left: auto; }
.cell { width: 27px; }
.cell.wide { width: 47px; }

.map text { font-family: "Noto Sans", sans-serif; font-size: 33px; paint-order: stroke; }
.land { fill: #ebe8e2; }
.parks .land { fill: #ebe8e2; }
.water { fill: #75cff0; }
.parks { fill: #b5e59b; }
.marsh { fill: #cfe7bb; }
.khaki { fill: #e4dcb8; }
.khaki-soft { fill: #d8dfb9; }
.ferry { fill: none; stroke: #5fbbe6; stroke-width: 2; }
.streets { fill: none; stroke: #fff; stroke-width: 7; stroke-linejoin: round; }
.streets .wide { stroke-width: 9; }
.streets .thin { stroke-width: 3; }
.yellow, .orange { fill: none; stroke-width: 11; stroke-linejoin: round; stroke-linecap: round; }
.yellow { stroke: #f0d060; }
.orange { stroke: #ffa25c; stroke-width: 12; }
.yellow .fat { stroke-width: 13; }
.orange .trunk { stroke-width: 14; }
.orange .fat { stroke-width: 24; }
.ramps { fill: none; stroke: #ffa25c; stroke-width: 3; }
.labels text { stroke: rgba(255, 255, 255, .75); stroke-width: 5px; }
.dark { fill: #444; }
.city { fill: #222; }
.map .city { font-size: 48px; }
.map .large { font-size: 56px; fill: #111; }
.map .big { font-size: 64px; fill: #000; font-weight: 500; }
.area { fill: #7d86b4; }
.poi { fill: #7a5a45; }
.labels .poi text { fill: #8b7465; }
.park-name { fill: #2a8a12; }
.labels .park-name text { fill: #5b8a52; }
.shields { fill: #fff; stroke: #333; stroke-width: 3; }
.map .shields text { fill: #333; stroke: none; font-size: 26px; font-weight: bold; text-anchor: middle; }
.map .shields .inv { fill: #fff; }
.map .shields .truck { font-size: 22px; stroke: #fff; stroke-width: 4px; }
.shields use { stroke: none; }
.mini { fill: #e15759; stroke: #fff; stroke-width: 2; paint-order: stroke; }
.marks { fill: #e15759; }
```
